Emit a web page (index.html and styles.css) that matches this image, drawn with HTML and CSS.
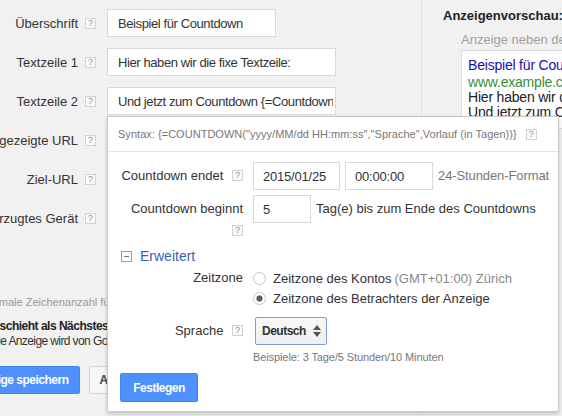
FILE: index.html
```html
<!DOCTYPE html>
<html>
<head>
  <meta charset="utf-8">
  <title>Anzeige bearbeiten</title>
  <link rel="stylesheet" href="styles.css">
</head>
<body>
  <div class="page">
    <div class="editor">
      <div class="fields">
        <div class="field">
          <div class="field-label">Überschrift</div>
          <span class="help">?</span>
          <input class="field-input field-input--short" type="text" value="Beispiel für Countdown">
        </div>
        <div class="field">
          <div class="field-label">Textzeile 1</div>
          <span class="help">?</span>
          <input class="field-input" type="text" value="Hier haben wir die fixe Textzeile:">
        </div>
        <div class="field">
          <div class="field-label">Textzeile 2</div>
          <span class="help">?</span>
          <input class="field-input" type="text" value="Und jetzt zum Countdown {=Countdown">
        </div>
        <div class="field">
          <div class="field-label">Angezeigte URL</div>
          <span class="help">?</span>
          <input class="field-input" type="text" value="www.example.com">
        </div>
        <div class="field">
          <div class="field-label">Ziel-URL</div>
          <span class="help">?</span>
          <input class="field-input" type="text" value="http://www.example.com">
        </div>
        <div class="field">
          <div class="field-label">Bevorzugtes Gerät</div>
          <span class="help">?</span>
          <input class="field-input" type="text" value="Alle">
        </div>
      </div>

      <p class="limit-note">Die maximale Zeichenanzahl für Anzeigentexte beachten</p>
      <div class="next-steps">
        <b>Was geschieht als Nächstes?</b><br>
        Ihre neue Anzeige wird von Google geprüft
      </div>

      <div class="actions">
        <button class="btn btn-primary">Anzeige speichern</button>
        <button class="btn">Abbrechen</button>
      </div>
    </div>

    <aside class="preview">
      <h2 class="preview-title">Anzeigenvorschau:</h2>
      <div class="preview-caption">Anzeige neben den Suchergebnissen</div>
      <div class="ad">
        <div class="ad-headline">Beispiel für Countdown</div>
        <div class="ad-url">www.example.com</div>
        <div class="ad-line">Hier haben wir die fixe Textzeile:</div>
        <div class="ad-line">Und jetzt zum Countdown</div>
      </div>
    </aside>

    <!-- countdown editor, opened from Textzeile 2 -->
    <div class="countdown-popup">
      <div class="syntax">
        <span>Syntax: {=COUNTDOWN("yyyy/MM/dd HH:mm:ss","Sprache",Vorlauf (in Tagen))}</span>
        <span class="help">?</span>
      </div>

      <div class="cd-body">
        <div class="cd-row">
          <div class="cd-label">Countdown endet <span class="help">?</span></div>
          <input class="cd-input cd-input--date" type="text" value="2015/01/25">
          <input class="cd-input cd-input--time" type="text" value="00:00:00">
          <span class="cd-hint cd-hint--muted">24-Stunden-Format</span>
        </div>

        <div class="cd-row cd-row--start">
          <div class="cd-label">Countdown beginnt <span class="help">?</span></div>
          <input class="cd-input cd-input--days" type="text" value="5">
          <span class="cd-hint">Tag(e) bis zum Ende des Countdowns</span>
        </div>

        <div class="advanced-toggle">
          <span class="toggle-box"></span>
          <span class="toggle-text">Erweitert</span>
        </div>

        <div class="cd-row cd-row--zone">
          <div class="cd-label cd-label--short">Zeitzone</div>
          <div class="zone-options">
            <label class="zone-option">
              <input class="radio" type="radio" name="zone">
              Zeitzone des Kontos <span class="muted">(GMT+01:00) Zürich</span>
            </label>
            <label class="zone-option">
              <input class="radio" type="radio" name="zone" checked>
              Zeitzone des Betrachters der Anzeige
            </label>
          </div>
        </div>

        <div class="cd-row cd-row--lang">
          <div class="cd-label cd-label--select">Sprache <span class="help">?</span></div>
          <button class="lang-select">
            <span>Deutsch</span>
            <svg width="8" height="12" viewBox="0 0 8 12">
              <path d="M0 5 L4 0 L8 5 Z M0 7 L8 7 L4 12 Z" fill="#555"/>
            </svg>
          </button>
        </div>
        <div class="lang-examples">Beispiele: 3 Tage/5 Stunden/10 Minuten</div>

        <button class="btn btn-primary btn-apply">Festlegen</button>
      </div>
    </div>
  </div>
</body>
</html>
```

FILE: styles.css
```css
/* AdWords ad editor with the countdown popup */
html, body {
  margin: 0;
  padding: 0;
}

body {
  width: 562px;
  height: 416px;
  overflow: hidden;
  background: #f1f1f1;
  font-family: "Liberation Sans", Arial, sans-serif;
  font-size: 13px;
  color: #333;
}

.page {
  position: relative;
  display: flex;
  height: 416px;
}

/* left column: ad fields */
.editor {
  flex: 0 0 465px;
  margin-left: -44px;
  padding-top: 9px;
  box-sizing: border-box;
}

.fields {
  display: flex;
  flex-direction: column;
  gap: 11px;
}

.field {
  display: flex;
  align-items: center;
  height: 28px;
}

.field-label {
  width: 122px;
  display: flex;
  justify-content: flex-end;
  white-space: nowrap;
}

.help {
  display: inline-flex;
  align-items: center;
  justify-content: center;
  box-sizing: border-box;
  width: 11px;
  height: 11px;
  border: 1px solid #d2d2d2;
  background: #fafafa;
  color: #8e8e8e;
  font-size: 9px;
  line-height: 1;
  letter-spacing: 0;
  vertical-align: middle;
}

.field .help {
  margin-left: 7px;
}

.field-input {
  box-sizing: border-box;
  width: 229px;
  height: 28px;
  margin-left: 11px;
  padding: 0 2px 0 10px;
  border: 1px solid #d9d9d9;
  background: #fff;
  font: inherit;
  letter-spacing: -0.4px;
  color: #333;
}

.field-input--short {
  width: 169px;
}

.limit-note {
  margin: 64px 0 0;
  font-size: 11px;
  line-height: 13px;
  color: #999;
}

.next-steps {
  margin: 10px 0 0 5px;
  font-size: 12px;
  line-height: 15px;
  letter-spacing: -0.6px;
  color: #333;
}

.next-steps b {
  color: #222;
  letter-spacing: -0.5px;
}

.actions {
  display: flex;
  gap: 9px;
  margin: 17px 0 0 4px;
}

.btn {
  height: 28px;
  padding: 0 10px;
  border: 1px solid #d5d5d5;
  border-radius: 2px;
  background: #f6f6f6;
  font-family: inherit;
  font-size: 12px;
  font-weight: bold;
  letter-spacing: -0.5px;
  color: #444;
  white-space: nowrap;
}

.btn-primary {
  background: #4d90fe;
  border-color: #3f84f5;
  color: #fff;
}

/* right column: ad preview */
.preview {
  flex: 1;
  border-left: 1px solid #e2e2e2;
  padding: 8px 0 0 21px;
  white-space: nowrap;
  overflow: hidden;
}

.preview-title {
  margin: 0;
  font-size: 13px;
  line-height: 16px;
  font-weight: bold;
  color: #222;
}

.preview-caption {
  margin: 8px 0 0 18px;
  line-height: 16px;
  color: #a0a0a0;
}

.ad {
  margin: 2px 0 0 18px;
  padding: 6px 6px 8px;
  background: #fff;
  border: 1px solid #dcdcdc;
  border-right: none;
  font-size: 14px;
  letter-spacing: -0.2px;
}

.ad-headline {
  line-height: 17px;
  color: #1a0dab;
}

.ad-url {
  line-height: 16px;
  color: #3b8f3b;
}

.ad-line {
  line-height: 15px;
  color: #222;
}

/* countdown popup */
.countdown-popup {
  position: absolute;
  left: 107px;
  top: 116px;
  width: 452px;
  box-sizing: border-box;
  background: #fff;
  border: 1px solid #c9c9c9;
  box-shadow: 0 2px 4px rgba(0, 0, 0, 0.2);
}

.syntax {
  display: flex;
  align-items: center;
  gap: 9px;
  height: 34px;
  padding: 0 10px;
  border-bottom: 1px solid #e5e5e5;
  font-size: 11px;
  letter-spacing: 0.03px;
  color: #777;
  white-space: nowrap;
}

.cd-body {
  padding: 10px 10px 9px;
}

.cd-row {
  display: flex;
  align-items: flex-start;
}

.cd-row--start {
  margin-top: 5px;
}

.cd-label {
  flex: 0 0 125px;
  margin-right: 10px;
  padding-top: 3px;
  line-height: 22px;
  text-align: right;
}

.cd-label .help {
  margin-left: 5px;
  position: relative;
  top: -1px;
}

.cd-input {
  box-sizing: border-box;
  height: 28px;
  padding: 0 9px;
  border: 1px solid #d9d9d9;
  background: #fff;
  font: inherit;
  letter-spacing: -0.2px;
  color: #333;
}

.cd-input--date { width: 87px; }
.cd-input--time { width: 88px; margin-left: 5px; }
.cd-input--days { width: 58px; }

.cd-hint {
  margin-left: 5px;
  line-height: 28px;
  white-space: nowrap;
}

.cd-hint--muted {
  color: #777;
  letter-spacing: -0.1px;
}

.advanced-toggle {
  display: flex;
  align-items: center;
  gap: 8px;
  margin-top: 4px;
  padding-left: 3px;
  height: 20px;
}

.toggle-box {
  position: relative;
  box-sizing: border-box;
  width: 11px;
  height: 11px;
  border: 1px solid #9c9c9c;
}

.toggle-box::before {
  content: '';
  position: absolute;
  left: 2px;
  right: 2px;
  top: 4px;
  height: 1px;
  background: #777;
}

.toggle-text {
  font-size: 14px;
  color: #3b5fb7;
}

.cd-row--zone {
  margin-top: 2px;
}

.cd-label--short {
  padding-top: 0;
  line-height: 20px;
}

.zone-options {
  display: flex;
  flex-direction: column;
}

.zone-option {
  display: flex;
  align-items: center;
  gap: 7px;
  height: 20px;
  white-space: nowrap;
}

.zone-option .muted {
  color: #888;
  margin-left: -4px;
}

.radio {
  appearance: none;
  -webkit-appearance: none;
  margin: 0;
  width: 13px;
  height: 13px;
  box-sizing: border-box;
  border: 1px solid #c6c6c6;
  border-radius: 50%;
  background: #fff;
}

.radio:checked {
  background: radial-gradient(circle, #5f5f5f 0 2.8px, #fff 3.4px);
}

.cd-row--lang {
  margin-top: 9px;
}

.cd-label--select {
  padding-top: 0;
  line-height: 28px;
}

.lang-select {
  display: flex;
  align-items: center;
  justify-content: space-between;
  box-sizing: border-box;
  width: 72px;
  height: 28px;
  margin-left: 2px;
  padding: 0 5px 0 6px;
  border: 1px solid #7a9fdc;
  border-radius: 2px;
  background: linear-gradient(#f8f8f8, #efefef);
  font-family: inherit;
  font-size: 12px;
  font-weight: bold;
  letter-spacing: -0.5px;
  color: #333;
}

.lang-examples {
  margin: 5px 0 0 135px;
  font-size: 11px;
  line-height: 14px;
  letter-spacing: -0.1px;
  color: #777;
}

.btn-apply {
  display: block;
  width: 78px;
  height: 29px;
  margin: 9px 0 0 2px;
  padding: 0;
}
```
